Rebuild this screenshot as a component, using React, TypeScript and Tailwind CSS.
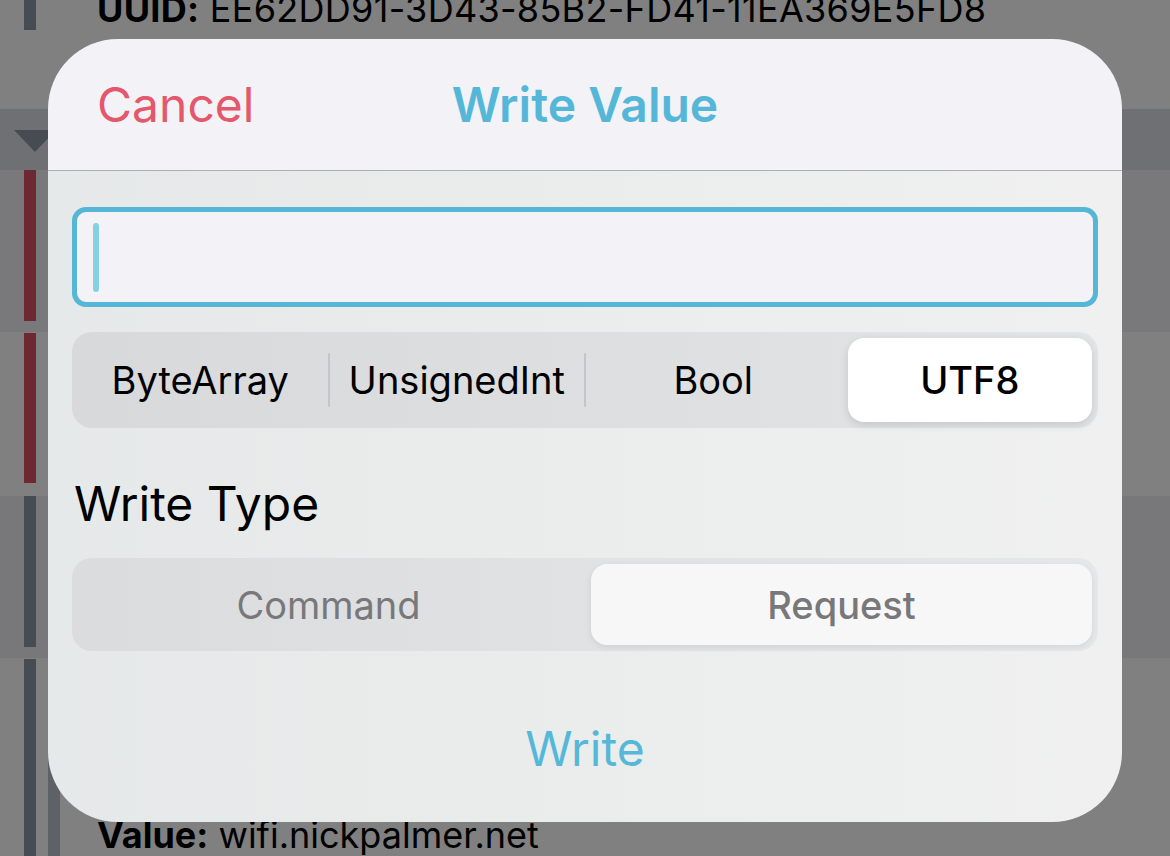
import React from 'react';

const font = { fontFamily: 'Inter, "Noto Sans", sans-serif' };

const Bar = ({ color, className = '' }: { color: string; className?: string }) => (
    <div className={`w-[12px] ${color} ${className}`} />
);

const Segment = ({
    labels,
    selected,
    textClass,
    bgClass,
    thumbClass,
    height,
}: {
    labels: string[];
    selected: number;
    textClass: string;
    bgClass: string;
    thumbClass: string;
    height: string;
}) => (
    <div
        className={`grid ${labels.length === 4 ? 'grid-cols-4' : 'grid-cols-2'} ${height} rounded-[20px] ${bgClass}`}
    >
        {labels.map((label, i) => {
            const isSel = i === selected;
            const showDivider = i < labels.length - 1 && i !== selected && i + 1 !== selected;
            return (
                <div key={label} className="relative flex p-[6px]">
                    <div
                        className={`flex flex-1 items-center justify-center rounded-[16px] ${isSel ? thumbClass : ''}`}
                    >
                        <span className={`text-[38px] leading-[40px] ${textClass} ${isSel ? 'font-medium' : ''}`}>
                            {label}
                        </span>
                    </div>
                    {showDivider && (
                        <div className="absolute right-[-1px] top-1/2 h-[54px] w-[2px] -translate-y-1/2 rounded-full bg-[#c4c5c8]" />
                    )}
                </div>
            );
        })}
    </div>
);

export default function App() {
    return (
        <div className="relative h-[856px] w-[1170px] overflow-hidden bg-[#808080]" style={font}>
            {/* Background list */}
            <div className="flex flex-col">
                <div className="flex h-[109px] bg-[#808080]">
                    <div className="w-[24px]" />
                    <Bar color="bg-[#474c54]" className="h-[30px]" />
                    <div className="-mt-[9px] ml-[61px] text-[36px] leading-[36px] tracking-[0.3px] text-black whitespace-nowrap">
                        <span className="font-bold">UUID:</span> EE62DD91-3D43-85B2-FD41-11EA369E5FD8
                    </div>
                </div>
                <div className="flex h-[61px] bg-[#6f7073] pt-[21px] pl-[14px]">
                    <div className="h-0 w-0 border-l-[21px] border-r-[21px] border-t-[22px] border-l-transparent border-r-transparent border-t-[#474b52]" />
                </div>
                <div className="flex h-[162px] bg-[#79797b] pl-[24px]">
                    <Bar color="bg-[#6e2832]" className="h-[151px]" />
                </div>
                <div className="flex h-[164px] bg-[#808080] pl-[24px] pt-[1px]">
                    <Bar color="bg-[#6e2832]" className="h-[150px]" />
                </div>
                <div className="flex h-[162px] bg-[#78787a] pl-[24px]">
                    <Bar color="bg-[#474c54]" className="h-[151px]" />
                </div>
                <div className="flex h-[198px] bg-[#808080] pl-[24px] pt-[1px]">
                    <Bar color="bg-[#474c54]" className="h-full" />
                    <div className="ml-[12px] h-full w-[12px] bg-[#5e6165]" />
                    <div className="ml-[37px] mt-[158px] text-[36px] leading-[36px] text-black whitespace-nowrap">
                        <span className="font-bold">Value:</span> wifi.nickpalmer.net
                    </div>
                </div>
            </div>

            {/* Alert */}
            <div className="absolute left-[48px] top-[39px] flex h-[783px] w-[1074px] flex-col overflow-hidden rounded-[70px]">
                <div className="grid h-[132px] grid-cols-[1fr_auto_1fr] items-center border-b border-[#aeaeb2] bg-[#f2f2f7]">
                    <div className="pl-[49px] text-[48px] leading-[48px] text-[#e5576a]">Cancel</div>
                    <div className="text-[48px] font-semibold leading-[48px] text-[#55b7d7]">Write Value</div>
                    <div />
                </div>
                <div className="flex flex-1 flex-col bg-linear-to-r from-[#e6e9e9] to-[#f0f0f0] px-[24px] pt-[36px]">
                    <div className="flex h-[100px] items-center rounded-[14px] border-[5px] border-[#55b6d6] bg-[#f2f2f7] pl-[16px]">
                        <div className="h-[69px] w-[6px] rounded-full bg-[#87d0e3]" />
                    </div>
                    <div className="mt-[25px]">
                        <Segment
                            labels={['ByteArray', 'UnsignedInt', 'Bool', 'UTF8']}
                            selected={3}
                            textClass="text-black"
                            bgClass="bg-linear-to-r from-[#d8d9db] to-[#e3e4e6]"
                            thumbClass="bg-white shadow-[0_3px_8px_rgba(0,0,0,0.12)]"
                            height="h-[96px]"
                        />
                    </div>
                    <div className="mt-[52px] pl-[2px] text-[48px] leading-[48px] text-black">Write Type</div>
                    <div className="mt-[30px]">
                        <Segment
                            labels={['Command', 'Request']}
                            selected={1}
                            textClass="text-[#78787a]"
                            bgClass="bg-linear-to-r from-[#dbdcde] to-[#e6e7e8]"
                            thumbClass="bg-[#f7f7f7] shadow-[0_2px_6px_rgba(0,0,0,0.08)]"
                            height="h-[93px]"
                        />
                    </div>
                    <div className="mt-[74px] text-center text-[48px] leading-[48px] text-[#55b8d8]">Write</div>
                </div>
            </div>
        </div>
    );
}
